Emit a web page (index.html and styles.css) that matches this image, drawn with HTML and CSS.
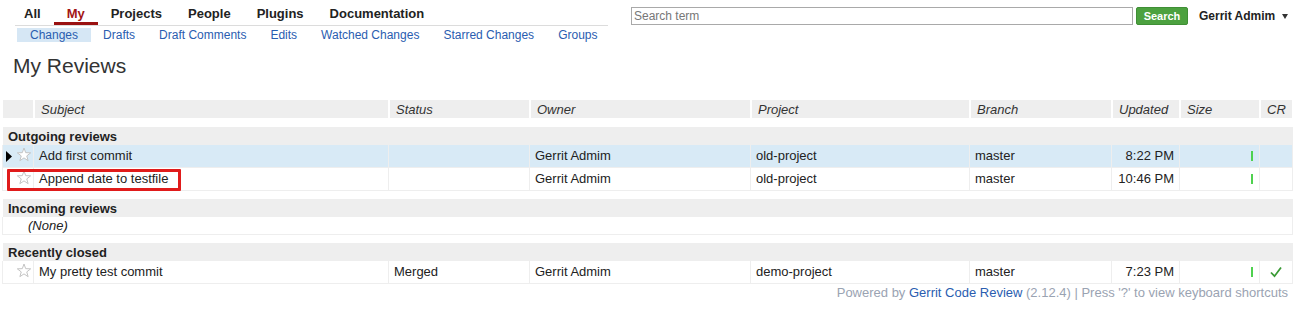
FILE: index.html
```html
<!DOCTYPE html>
<html>
<head>
<meta charset="utf-8">
<title>My Reviews</title>
<link rel="stylesheet" href="styles.css">
</head>
<body>
<header class="topbar">
  <div class="menus">
    <nav class="topmenu">
      <a class="tm">All</a>
      <a class="tm tm-active">My</a>
      <a class="tm">Projects</a>
      <a class="tm">People</a>
      <a class="tm">Plugins</a>
      <a class="tm">Documentation</a>
    </nav>
    <nav class="submenu">
      <a class="sm sm-active">Changes</a>
      <a class="sm">Drafts</a>
      <a class="sm">Draft Comments</a>
      <a class="sm">Edits</a>
      <a class="sm">Watched Changes</a>
      <a class="sm">Starred Changes</a>
      <a class="sm">Groups</a>
    </nav>
  </div>
  <div class="searchbar">
    <input class="search-input" type="text" placeholder="Search term">
    <button class="search-btn">Search</button>
    <span class="user">Gerrit Admim</span>
    <svg class="caret" width="6" height="5" viewBox="0 0 6 5"><polygon points="0,0 6,0 3,5" fill="#333"/></svg>
  </div>
</header>

<h1 class="page-title">My Reviews</h1>

<div class="changes">
  <table class="change-table">
    <colgroup>
      <col class="c-icon"><col class="c-subject"><col class="c-status"><col class="c-owner"><col class="c-project"><col class="c-branch"><col class="c-updated"><col class="c-size"><col class="c-cr">
    </colgroup>
    <thead>
      <tr>
        <th></th><th>Subject</th><th>Status</th><th>Owner</th><th>Project</th><th>Branch</th><th>Updated</th><th>Size</th><th>CR</th>
      </tr>
    </thead>
    <tbody>
      <tr class="section"><td colspan="9">Outgoing reviews</td></tr>
      <tr class="row row-active">
        <td class="icons"><svg class="pointer" width="6" height="11" viewBox="0 0 6 11"><polygon points="0,0 6,5.5 0,11" fill="#000"/></svg><svg class="star" width="16" height="16" viewBox="0 0 16 16"><polygon points="8,1 9.7,5.65 14.66,5.84 10.76,8.9 12.11,13.66 8,10.9 3.89,13.66 5.24,8.9 1.34,5.84 6.3,5.65" fill="#fff" stroke="#c4c4c4" stroke-width="1"/></svg></td>
        <td>Add first commit</td><td></td><td>Gerrit Admim</td><td>old-project</td><td>master</td><td class="num">8:22 PM</td><td class="num"><span class="sizebar"></span></td><td></td>
      </tr>
      <tr class="row">
        <td class="icons"><svg class="pointer off" width="6" height="11" viewBox="0 0 6 11"><polygon points="0,0 6,5.5 0,11" fill="#000"/></svg><svg class="star" width="16" height="16" viewBox="0 0 16 16"><polygon points="8,1 9.7,5.65 14.66,5.84 10.76,8.9 12.11,13.66 8,10.9 3.89,13.66 5.24,8.9 1.34,5.84 6.3,5.65" fill="#fff" stroke="#c4c4c4" stroke-width="1"/></svg></td>
        <td>Append date to testfile</td><td></td><td>Gerrit Admim</td><td>old-project</td><td>master</td><td class="num">10:46 PM</td><td class="num"><span class="sizebar"></span></td><td></td>
      </tr>
      <tr class="section"><td colspan="9">Incoming reviews</td></tr>
      <tr class="none"><td colspan="9">(None)</td></tr>
      <tr class="section"><td colspan="9">Recently closed</td></tr>
      <tr class="row">
        <td class="icons"><svg class="pointer off" width="6" height="11" viewBox="0 0 6 11"><polygon points="0,0 6,5.5 0,11" fill="#000"/></svg><svg class="star" width="16" height="16" viewBox="0 0 16 16"><polygon points="8,1 9.7,5.65 14.66,5.84 10.76,8.9 12.11,13.66 8,10.9 3.89,13.66 5.24,8.9 1.34,5.84 6.3,5.65" fill="#fff" stroke="#c4c4c4" stroke-width="1"/></svg></td>
        <td>My pretty test commit</td><td>Merged</td><td>Gerrit Admim</td><td>demo-project</td><td>master</td><td class="num">7:23 PM</td><td class="num"><span class="sizebar"></span></td><td class="cr"><svg width="12" height="12" viewBox="0 0 12 12"><path d="M1 6.5 L4.5 10.2 L11 1.5" fill="none" stroke="#3a9a35" stroke-width="1.8"/></svg></td>
      </tr>
    </tbody>
  </table>
  <div class="highlight-box"></div>
</div>

<footer class="footer">Powered by <a class="footer-link">Gerrit Code Review</a> (2.12.4) | Press '?' to view keyboard shortcuts</footer>
</body>
</html>
```

FILE: styles.css
```css
html, body {
  margin: 0;
  padding: 0;
  background: #fff;
}
body {
  font-family: "Liberation Sans", Arial, sans-serif;
  font-size: 13px;
  color: #222;
}

/* Top bar */
.topbar {
  display: flex;
  align-items: flex-start;
}
.menus {
  flex: 0 0 593px;
  margin-left: 15px;
  width: 593px;
}
.topmenu {
  display: flex;
  margin-left: -4px;
  height: 25px;
  white-space: nowrap;
}
.tm {
  flex: none;
  padding: 6px 13px 1px;
  line-height: 15px;
  font-weight: bold;
  font-size: 13px;
  color: #222;
  border-bottom: 3px solid transparent;
  height: 15px;
}
.tm-active {
  color: #a31515;
  border-bottom-color: #9a1111;
}
.submenu {
  display: flex;
  border-top: 1px solid #dcdcdc;
  padding-top: 2px;
  padding-left: 2px;
  white-space: nowrap;
}
.sm {
  flex: none;
  padding: 0 12px;
  line-height: 14px;
  font-size: 12px;
  color: #2a5db0;
}
.sm-active {
  padding: 0 13px;
  background: #d6e7f5;
}

.searchbar {
  display: flex;
  align-items: center;
  margin-left: 23px;
  padding-top: 7px;
  white-space: nowrap;
}
.search-input {
  box-sizing: border-box;
  width: 502px;
  height: 18px;
  margin: 0;
  padding: 0 2px;
  border: 1px solid #a9a9a9;
  font-family: "Liberation Sans", Arial, sans-serif;
  font-size: 12px;
  color: #222;
}
.search-input::placeholder {
  color: #777;
}
.search-btn {
  box-sizing: border-box;
  width: 52px;
  height: 18px;
  margin: 0 0 0 3px;
  padding: 0;
  border: 1px solid #3f8f35;
  border-radius: 2px;
  background: #4ca13f;
  color: #fff;
  font-family: "Liberation Sans", Arial, sans-serif;
  font-size: 11px;
  font-weight: bold;
}
.user {
  margin-left: 11px;
  font-size: 12px;
  font-weight: bold;
  color: #222;
}
.caret {
  margin-left: 7px;
  margin-top: 1px;
}

/* Title */
.page-title {
  margin: 12px 0 0 0;
  padding-left: 13px;
  font-size: 21px;
  line-height: 24px;
  font-weight: normal;
  color: #333;
}

/* Table */
.changes {
  position: relative;
  margin-top: 21px;
}
.change-table {
  margin-left: 2px;
  width: 1291px;
  table-layout: fixed;
  border-collapse: separate;
  border-spacing: 0;
}
.c-icon { width: 32px; }
.c-subject { width: 355px; }
.c-status { width: 141px; }
.c-owner { width: 221px; }
.c-project { width: 219px; }
.c-branch { width: 142px; }
.c-updated { width: 68px; }
.c-size { width: 80px; }
.c-cr { width: 33px; }

.change-table th {
  background: #eee;
  border: 1px solid #fff;
  padding: 2px 6px 1px;
  line-height: 15px;
  font-style: italic;
  font-weight: normal;
  text-align: left;
  color: #333;
  white-space: nowrap;
}
.section td {
  background: #eee;
  border-top: 8px solid #fff;
  border-left: 1px solid #fff;
  padding: 2px 5px 1px;
  line-height: 15px;
  font-weight: bold;
  color: #222;
}
.row td {
  padding: 0 5px;
  line-height: 22px;
  height: 22px;
  border-right: 1px solid #eee;
  border-bottom: 1px solid #eee;
  white-space: nowrap;
  vertical-align: middle;
}
.row td:first-child {
  border-left: 1px solid #eee;
}
.row-active td {
  background: #d8eaf6;
}
.row td.icons {
  padding: 0 0 0 3px;
  font-size: 0;
  line-height: 22px;
}
.pointer {
  vertical-align: middle;
  margin-right: 4px;
}
.pointer.off {
  visibility: hidden;
}
.star {
  vertical-align: middle;
  margin-top: -2px;
}
.row td.num {
  text-align: right;
}
.sizebar {
  display: inline-block;
  width: 2px;
  height: 10px;
  background: #4fd14f;
  vertical-align: middle;
  margin-top: -2px;
  margin-right: 1px;
}
.row td.cr {
  text-align: center;
  font-size: 0;
}
.row td.cr svg {
  vertical-align: middle;
}
.none td {
  padding: 0 5px 0 25px;
  line-height: 17px;
  font-style: italic;
  border-left: 1px solid #eee;
  border-right: 1px solid #eee;
  border-bottom: 1px solid #eee;
}

.highlight-box {
  position: absolute;
  left: 7px;
  top: 70px;
  width: 174px;
  height: 22px;
  box-sizing: border-box;
  border: 3px solid #e01b1b;
  border-radius: 1px;
}

/* Footer */
.footer {
  text-align: right;
  padding-top: 1px;
  padding-right: 9px;
  line-height: 15px;
  font-size: 13px;
  color: #9aa3b2;
}
.footer-link {
  color: #2a5db0;
}
```
